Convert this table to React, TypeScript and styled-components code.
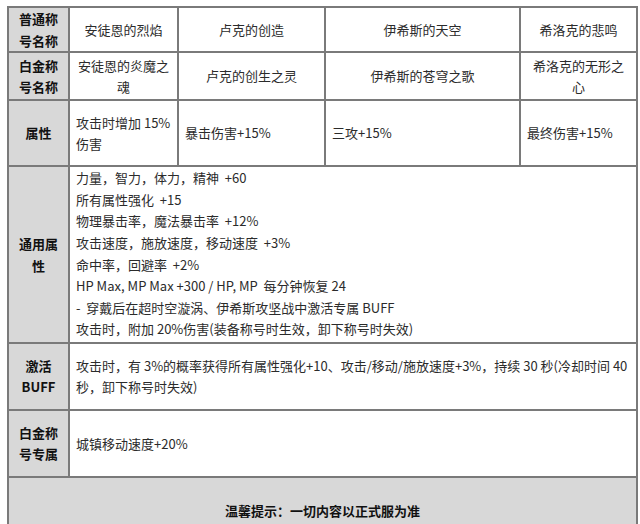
import React from "react";
import styled, { createGlobalStyle } from "styled-components";

const Global = createGlobalStyle`
  html, body { margin: 0; padding: 0; background: #ffffff; }
  body { font-family: "Noto Sans CJK SC", "Noto Sans", sans-serif; }
`;

const Page = styled.div`
  padding: 6px 0 0 7px;
  width: 640px;
  height: 524px;
  box-sizing: border-box;
  overflow: hidden;
`;

const Table = styled.table`
  border-collapse: collapse;
  table-layout: fixed;
  width: 629px;
  font-size: 13px;
  line-height: 21.6px;
  color: #2b2b2b;
  border: 2px solid #7a7a7a;
`;

const Row = styled.tr<{ $h: number }>`
  height: ${(p) => p.$h}px;
`;

const Label = styled.th`
  background: #d8d8d8;
  border: 2px solid #7a7a7a;
  font-weight: 700;
  color: #111;
  text-align: center;
  padding: 0 6px;
  vertical-align: middle;
`;

const Cell = styled.td<{ $center?: boolean }>`
  border: 2px solid #7a7a7a;
  text-align: ${(p) => (p.$center ? "center" : "left")};
  padding: 1px 6px;
  vertical-align: middle;
  font-weight: 400;
  white-space: pre-wrap;
`;

const ListCell = styled(Cell)`
  padding: 0 6px 2px;
  vertical-align: top;
`;

const Footer = styled.td`
  background: #d8d8d8;
  border: 2px solid #7a7a7a;
  text-align: center;
  font-weight: 700;
  color: #111;
  height: 66px;
  padding: 0;
`;

const Line = styled.div``;

const generalLines = [
  "力量，智力，体力，精神  +60",
  "所有属性强化  +15",
  "物理暴击率，魔法暴击率  +12%",
  "攻击速度，施放速度，移动速度  +3%",
  "命中率，回避率  +2%",
  "HP Max, MP Max +300 / HP, MP  每分钟恢复 24",
  "-  穿戴后在超时空漩涡、伊希斯攻坚战中激活专属 BUFF",
  "攻击时，附加 20%伤害(装备称号时生效，卸下称号时失效)",
];

export default function App() {
  return (
    <Page>
      <Global />
      <Table>
        <colgroup>
          <col style={{ width: 61 }} />
          <col style={{ width: 109 }} />
          <col style={{ width: 147 }} />
          <col style={{ width: 195 }} />
          <col style={{ width: 117 }} />
        </colgroup>
        <tbody>
          <Row $h={44}>
            <Label>普通称号名称</Label>
            <Cell $center>安徒恩的烈焰</Cell>
            <Cell $center>卢克的创造</Cell>
            <Cell $center>伊希斯的天空</Cell>
            <Cell $center>希洛克的悲鸣</Cell>
          </Row>
          <Row $h={48}>
            <Label>白金称号名称</Label>
            <Cell $center>安徒恩的炎魔之魂</Cell>
            <Cell $center>卢克的创生之灵</Cell>
            <Cell $center>伊希斯的苍穹之歌</Cell>
            <Cell $center>希洛克的无形之心</Cell>
          </Row>
          <Row $h={66}>
            <Label>属性</Label>
            <Cell>攻击时增加 15%伤害</Cell>
            <Cell>暴击伤害+15%</Cell>
            <Cell>三攻+15%</Cell>
            <Cell>最终伤害+15%</Cell>
          </Row>
          <Row $h={176}>
            <Label>通用属性</Label>
            <ListCell colSpan={4}>
              {generalLines.map((l) => (
                <Line key={l}>{l}</Line>
              ))}
            </ListCell>
          </Row>
          <Row $h={67}>
            <Label>激活 BUFF</Label>
            <Cell colSpan={4}>
              攻击时，有 3%的概率获得所有属性强化+10、攻击/移动/施放速度+3%，持续 30 秒(冷却时间 40 秒，卸下称号时失效)
            </Cell>
          </Row>
          <Row $h={67}>
            <Label>白金称号专属</Label>
            <Cell colSpan={4}>城镇移动速度+20%</Cell>
          </Row>
          <tr>
            <Footer colSpan={5}>温馨提示：一切内容以正式服为准</Footer>
          </tr>
        </tbody>
      </Table>
    </Page>
  );
}
